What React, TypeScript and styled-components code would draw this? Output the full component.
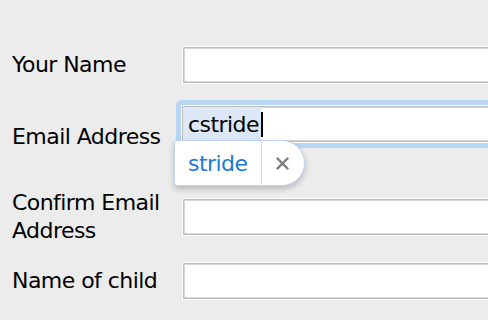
import React from "react";
import styled, { createGlobalStyle } from "styled-components";

const GlobalStyle = createGlobalStyle`
  html, body {
    margin: 0;
    padding: 0;
    background: #ececec;
    overflow: hidden;
  }
  body {
    font-family: "DejaVu Sans", Verdana, sans-serif;
  }
`;

const Page = styled.div`
  width: 488px;
  height: 320px;
  padding: 0 0 0 12px;
  box-sizing: border-box;
  overflow: hidden;
  display: flex;
  flex-direction: column;
`;

const Row = styled.div<{ $top: number }>`
  display: grid;
  grid-template-columns: 160px 340px;
  column-gap: 10px;
  align-items: center;
  margin-top: ${(p) => p.$top}px;
`;

const Label = styled.label`
  font-size: 22px;
  letter-spacing: -0.55px;
  line-height: 28px;
  color: #000;
`;

const Field = styled.div`
  display: flex;
  flex-direction: column;
  align-items: flex-start;
`;

const TextInput = styled.div`
  width: 340px;
  height: 38px;
  box-sizing: border-box;
  background: #fff;
  border: 1px solid #fff;
  box-shadow: inset 0 0 0 1px #bdbdbd, inset 0 0 0 2px #d6d6d6;
`;

const FocusRing = styled.div`
  margin-left: -6px;
  padding: 5px;
  border-radius: 6px;
  background: #b7d5f5;
`;

const FocusedInput = styled(TextInput)`
  display: flex;
  align-items: stretch;
  padding: 1px;
  font-size: 22px;
  letter-spacing: -0.55px;
  color: #000;
`;

const Selected = styled.span`
  display: flex;
  align-items: center;
  padding: 0 2px 0 5px;
  background: #dce8f7;
`;

const Caret = styled.span`
  width: 2px;
  margin: 5px 0 4px;
  background: #000;
`;

const Suggest = styled.div`
  display: flex;
  align-items: stretch;
  height: 46px;
  box-sizing: border-box;
  margin: -8px 0 -12px -8px;
  position: relative;
  background: #fff;
  border: 1px solid #bcd3f4;
  border-radius: 3px 23px 23px 3px;
  box-shadow: 0 3px 6px rgba(0, 0, 0, 0.22);
`;

const SuggestText = styled.span`
  display: flex;
  align-items: center;
  padding: 0 14px 0 13px;
  font-size: 22px;
  letter-spacing: -0.55px;
  color: #1a7ad3;
  border-right: 1px solid #c9dbf5;
`;

const Dismiss = styled.span`
  display: flex;
  align-items: center;
  justify-content: center;
  width: 40px;
  padding-right: 2px;
`;

const CrossIcon = () => (
  <svg width="13" height="13" viewBox="0 0 13 13">
    <path
      d="M1.5 1.5 L11.5 11.5 M11.5 1.5 L1.5 11.5"
      stroke="#7a7a7a"
      strokeWidth="2.4"
      strokeLinecap="round"
    />
  </svg>
);

export default function App() {
  return (
    <Page>
      <GlobalStyle />
      <Row $top={46}>
        <Label>Your Name</Label>
        <Field>
          <TextInput />
        </Field>
      </Row>
      <Row $top={16}>
        <Label>Email Address</Label>
        <Field>
          <FocusRing>
            <FocusedInput>
              <Selected>cstride</Selected>
              <Caret />
            </FocusedInput>
          </FocusRing>
          <Suggest>
            <SuggestText>stride</SuggestText>
            <Dismiss>
              <CrossIcon />
            </Dismiss>
          </Suggest>
        </Field>
      </Row>
      <Row $top={15}>
        <Label>Confirm Email Address</Label>
        <Field>
          <TextInput />
        </Field>
      </Row>
      <Row $top={17}>
        <Label>Name of child</Label>
        <Field>
          <TextInput />
        </Field>
      </Row>
    </Page>
  );
}
